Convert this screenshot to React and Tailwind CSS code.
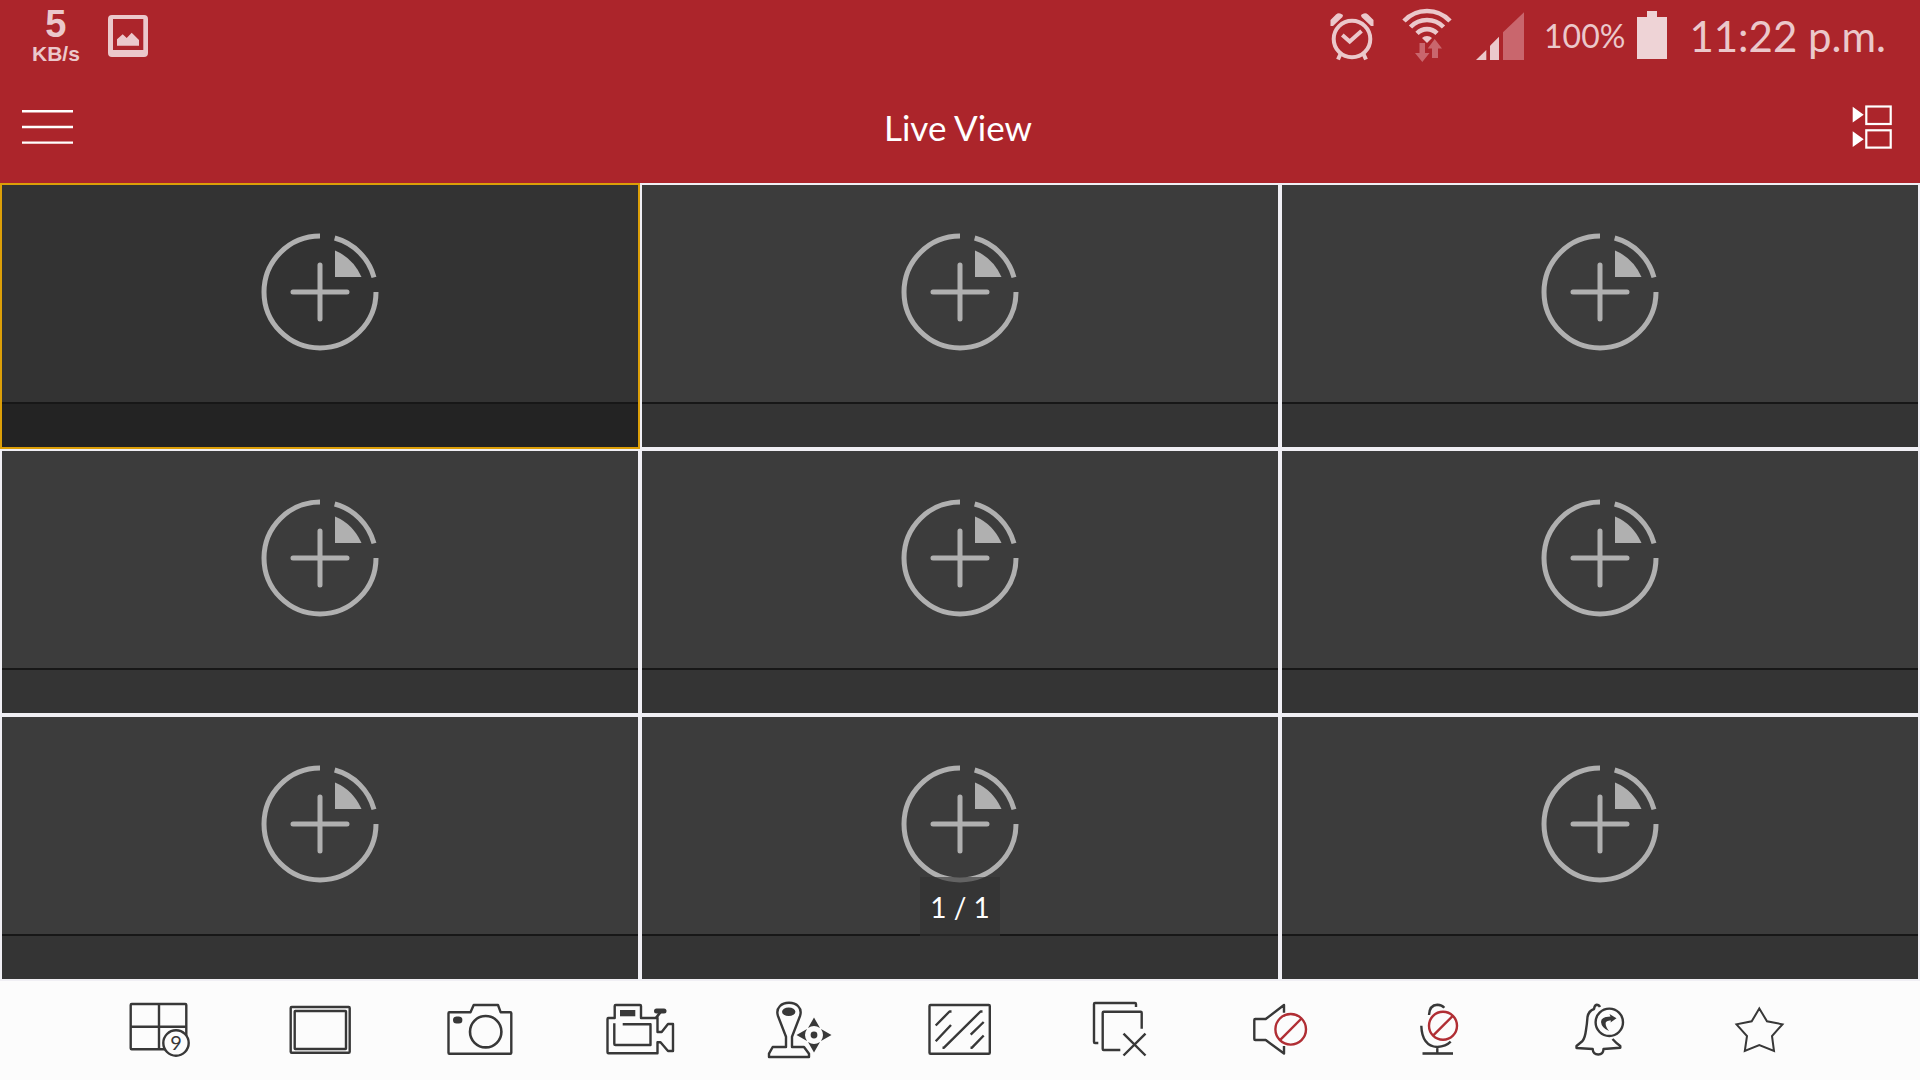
import { useState } from "react";

// ============================
// STATUS BAR ICONS
// ============================

const PictureIcon = () => (
  <svg width="40" height="72" viewBox="0 0 40 72" fill="#ebc8cb">
    <path
      fillRule="evenodd"
      d="M4 15H36Q40 15 40 19V53Q40 57 36 57H4Q0 57 0 53V19Q0 15 4 15ZM5 19V50H35.300V19Z"
    />
    <path d="M9 45.700V39.300L14.700 34.300L18.700 38L23.700 32.700L31 40V45.700Z" />
  </svg>
);

const AlarmIcon = () => (
  <svg
    width="44"
    height="72"
    viewBox="0 0 44 72"
    fill="none"
    stroke="#ebc8cb"
    strokeWidth="4"
  >
    <circle cx="22" cy="39" r="18.300" />
    <path d="M12.300 35L19.700 41.500L31.500 31" />
    <path d="M10.500 54L8 59.500M33.500 54L36 59.500" />
    <path
      d="M0.500 26V20L6 14.500Q9 12 13 15L12.500 17L3 26ZM43.500 26V20L38 14.500Q35 12 31 15L31.500 17L41 26Z"
      fill="#ebc8cb"
      stroke="none"
    />
  </svg>
);

const WifiIcon = () => (
  <svg width="50" height="72" viewBox="0 0 50 72" fill="none">
    <g stroke="#ebc8cb" strokeWidth="4.600">
      <path d="M2 21A31.500 31.500 0 0 1 48 21" />
      <path d="M8.500 27A23 23 0 0 1 41.500 27" />
      <path d="M15 33.300A14 14 0 0 1 35 33.300" />
    </g>
    <path d="M20 38A7 7 0 0 1 30 38L25 43Z" fill="#ebc8cb" />
    <path d="M17.500 43H23V53H27.500L20.300 62L13 53H17.500Z" fill="#c9666d" />
    <path
      d="M32.700 39L40 48.500H36V58H30V48.500H25.700Z"
      fill="#c9666d"
    />
  </svg>
);

const SignalIcon = () => (
  <svg width="48" height="72" viewBox="0 0 48 72" fill="#ebc8cb">
    <path d="M0 60L10.300 50V60Z" />
    <path d="M14 60V45.700L23 36.700V60Z" />
    <path d="M27 60V32.300L48 12.300V60Z" fill="#c9666d" />
  </svg>
);

const BatteryIcon = () => (
  <svg width="30" height="72" viewBox="0 0 30 72" fill="#eed3d6">
    <path d="M10 11H20V17H30V59H0V17H10Z" />
  </svg>
);

// ============================
// TITLE BAR ICONS
// ============================

const MenuIcon = () => (
  <svg width="52" height="40" viewBox="0 0 52 40" stroke="#fff">
    <path d="M0 3.300H51M0 19H51M0 34.600H51" strokeWidth="2.400" />
  </svg>
);

const DevicesIcon = () => (
  <svg width="44" height="56" viewBox="0 0 44 56" fill="#fff">
    <path d="M2.700 6.700L13.700 14.700L2.700 22.500ZM2.700 31.300L13.700 39.300L2.700 47Z" />
    <g fill="none" stroke="#fff" strokeWidth="2.200">
      <rect x="16.300" y="6.500" width="24.400" height="17.500" />
      <rect x="16.300" y="30.300" width="24.400" height="17.300" />
    </g>
  </svg>
);

// ============================
// CAMERA CELL ICON
// ============================

const AddCameraIcon = () => (
  <svg
    width="118"
    height="118"
    viewBox="-59 -59 118 118"
    fill="none"
    stroke="#b0b0b0"
    strokeWidth="5"
  >
    <path d="M0 -56A56 56 0 1 0 56 0" />
    <path d="M14.700 -54A56 56 0 0 1 54 -14.700" />
    <path
      d="M15 -41.500Q33 -34 41.500 -15H15Z"
      fill="#b0b0b0"
      stroke="none"
    />
    <path d="M-27 0H27M0 -27V27" strokeLinecap="round" />
  </svg>
);

// ============================
// TOOLBAR ICONS
// ============================

const ToolSvg = ({ children }) => (
  <svg
    width="72"
    height="64"
    viewBox="-36 -32 72 64"
    fill="none"
    stroke="#383838"
    strokeWidth="2.400"
    strokeLinejoin="round"
  >
    {children}
  </svg>
);

const Forbidden = ({ cx, cy, r, d }) => (
  <g stroke="#b02e34">
    <circle cx={cx} cy={cy} r={r} />
    <path d={d} />
  </g>
);

const tools = [
  {
    name: "Window division",
    icon: (
      <ToolSvg>
        <rect x="-29.300" y="-26" width="55.600" height="45.300" rx="1" />
        <path d="M-1 -26V19.300M-29.300 -3.300H26.300" />
        <circle cx="16" cy="13" r="12.700" fill="#fcfcfc" />
        <text
          x="16"
          y="20"
          textAnchor="middle"
          fontSize="20"
          fontFamily="Lato, sans-serif"
          fill="#383838"
          stroke="none"
        >
          9
        </text>
      </ToolSvg>
    ),
  },
  {
    name: "Full screen",
    icon: (
      <ToolSvg>
        <rect x="-29.300" y="-23" width="59" height="45.700" rx="1" />
        <rect x="-25.300" y="-19" width="51.300" height="38" rx="0.500" />
      </ToolSvg>
    ),
  },
  {
    name: "Capture",
    icon: (
      <ToolSvg>
        <path d="M-30.700 -17.700H-9.500L-6.300 -25H18L20.700 -17.700H30.300Q31.300 -17.700 31.300 -16.700V22.700Q31.300 23.700 30.300 23.700H-30.700Q-31.500 23.700 -31.500 22.700V-16.700Q-31.500 -17.700 -30.700 -17.700Z" />
        <circle cx="5.700" cy="1.700" r="15.700" strokeWidth="2.600" />
        <rect
          x="-27"
          y="-13.500"
          width="9.400"
          height="7"
          rx="3.500"
          fill="#383838"
          stroke="none"
        />
      </ToolSvg>
    ),
  },
  {
    name: "Record",
    icon: (
      <ToolSvg>
        <path d="M1 -12H17.500V2H21.700L28 -6H33V21H28L20.500 12.300H17.500V23.300H-31.500Q-32.500 23.300 -32.500 22.300V-11Q-32.500 -12 -31.500 -12H-25.300V-24Q-25.300 -25 -24.300 -25H0Q1 -25 1 -24Z" />
        <path d="M-17.300 -5.700H10.500V15H-24.500Q-25.700 15 -25.700 14V-6.700" />
        <rect
          x="-20"
          y="-20"
          width="15.300"
          height="6.300"
          fill="#383838"
          stroke="none"
        />
        <path d="M16.500 -19H24" strokeWidth="5" strokeLinecap="round" />
        <path d="M20.500 -18L16 -12" strokeWidth="2.800" />
      </ToolSvg>
    ),
  },
  {
    name: "PTZ control",
    icon: (
      <ToolSvg>
        <path d="M-14 17V6.700L-22 -14Q-24 -20 -20 -24Q-17 -27.300 -11 -27.300Q-5 -27.300 -2 -24Q2 -20 0 -14L-8 6.700V17H4L9 23.700V27H-31V23.700L-27.300 17Z" />
        <ellipse
          cx="-11.300"
          cy="-18.300"
          rx="6.700"
          ry="4.300"
          fill="#383838"
          stroke="none"
        />
        <g fill="#383838" stroke="none">
          <path d="M14 -12.500L20 -2Q14 -6 8 -2Z" />
          <path d="M14 22.500L20 12Q14 16 8 12Z" />
          <path d="M-3.500 5L7 -1Q3 5 7 11Z" />
          <path d="M31.500 5L21 -1Q25 5 21 11Z" />
          <circle cx="14" cy="5" r="3.400" />
        </g>
      </ToolSvg>
    ),
  },
  {
    name: "Video quality",
    icon: (
      <ToolSvg>
        <rect x="-30.500" y="-25" width="60.300" height="48.700" rx="1" />
        <path d="M-24.300 -4.500L-10.500 -18.500H-8.500M-24.300 11.300L-9 -5M-17.500 17.700H-16L20.500 -18.500H22.500M10.700 4.700L23.700 -8M10.500 17.700H12L23.700 5.500" />
      </ToolSvg>
    ),
  },
  {
    name: "Close all",
    icon: (
      <ToolSvg>
        <path d="M-21.700 13H-25Q-26 13 -26 12V-26Q-26 -27 -25 -27H15Q16 -27 16 -26V-23" />
        <path d="M0.300 20H-16.300Q-17.300 20 -17.300 19V-17.300Q-17.300 -18.300 -16.300 -18.300H20.700Q21.700 -18.300 21.700 -17.300V-1.300" />
        <path d="M3.500 3.700L25.500 25.500M25.500 3.700L3.500 25.500" />
      </ToolSvg>
    ),
  },
  {
    name: "Audio",
    icon: (
      <ToolSvg>
        <path d="M4 -17.300V-25L-14.300 -11H-24.700Q-25.700 -11 -25.700 -10V9Q-25.700 10 -24.700 10H-14.300L4 23.500V16" />
        <Forbidden
          cx="10.700"
          cy="-0.700"
          r="15.300"
          d="M21.500 -11.500L0 10.200"
        />
      </ToolSvg>
    ),
  },
  {
    name: "Two-way audio",
    icon: (
      <ToolSvg>
        <path d="M-11 -15Q-10.500 -25 -2.700 -25.300Q2 -25 4.300 -22.300" />
        <path d="M-18.700 -4.300Q-18 16 -2.700 17Q6 16.500 10.700 11.700M-2.700 17V23" />
        <path d="M-17.500 23.500H13" strokeWidth="2.600" />
        <Forbidden cx="3" cy="-4.300" r="14" d="M13 -14.300L-7 5.600" />
      </ToolSvg>
    ),
  },
  {
    name: "Alarm output",
    icon: (
      <ToolSvg>
        <path d="M0 -23Q-1 -25.300 -3.300 -25.300Q-5.500 -25 -6 -21Q-11.500 -19 -12.500 -13Q-13 -6 -14 0Q-15 8 -17.500 11L-23.500 16V18L-7.300 19Q-7 24.500 -1.700 24.500Q3.300 24.500 3.500 19L20.300 17.700V16Q16 13 12.500 9" />
        <circle cx="9.300" cy="-7.700" r="13.700" />
        <path
          d="M16.500 -11.700L9.500 -16L10.500 -13.500Q1 -13.500 1 -8Q1.500 -2 9 1Q4.500 -5 6 -8Q7.500 -10 11 -9.500L10.500 -7.500Z"
          fill="#383838"
          stroke="none"
        />
      </ToolSvg>
    ),
  },
  {
    name: "Favorites",
    icon: (
      <ToolSvg>
        <path
          strokeLinejoin="miter"
          strokeWidth="2"
          d="M-0.700 -21.500L7 -8.700L22.500 -5.700L12 6L14 21L-0.700 15L-15.200 21L-13 6L-23.500 -5.700L-8.300 -8.700Z"
        />
      </ToolSvg>
    ),
  },
];

const cameras = [1, 2, 3, 4, 5, 6, 7, 8, 9];

export default function App() {

  const [selected, setSelected] =
    useState(1);

  return (

    <div className="min-h-screen flex flex-col bg-[#fcfcfc] font-['Lato','Liberation_Sans',sans-serif]">

      {/* STATUS BAR */}
      <div className="h-[72px] shrink-0 flex items-center justify-between bg-[#ac252b] pl-8 pr-[34px] text-[#ebc8cb]">

        <div className="flex items-center gap-7">

          <div className="flex flex-col items-center font-['Liberation_Sans',sans-serif] font-bold">
            <span className="text-[38px] leading-9">5</span>
            <span className="text-[21px] leading-6">KB/s</span>
          </div>

          <PictureIcon />

        </div>

        <div className="flex items-center">
          <AlarmIcon />
          <div className="ml-7">
            <WifiIcon />
          </div>
          <div className="ml-6">
            <SignalIcon />
          </div>
          <span className="ml-5 text-[32px]">100%</span>
          <div className="ml-3">
            <BatteryIcon />
          </div>
          <span className="ml-[22px] text-[42px]">11:22 p.m.</span>
        </div>

      </div>

      {/* TITLE BAR */}
      <header className="h-[111px] shrink-0 grid grid-cols-[1fr_auto_1fr] items-center bg-[#ac252b] pl-[22px] pr-[26px] text-white">

        <button aria-label="Menu" className="justify-self-start">
          <MenuIcon />
        </button>

        <h1 className="text-[35px]">Live View</h1>

        <button aria-label="Devices" className="justify-self-end">
          <DevicesIcon />
        </button>

      </header>

      {/* CAMERA GRID */}
      <main className="relative flex-1 grid grid-cols-3 grid-rows-3">

        {cameras.map((id) => (

          <button
            key={id}
            aria-label={`Add camera ${id}`}
            onClick={() =>
              setSelected(id)
            }
            className={`flex flex-col border-2 ${
              selected === id
                ? "border-[#dc9f08] bg-[#333333]"
                : "border-[#f0eff4] bg-[#3c3c3c]"
            }`}
          >
            <span className="flex-1 w-full flex items-center justify-center pb-[3px]">
              <AddCameraIcon />
            </span>
            <span
              className={`h-[45px] w-full border-t-2 border-[#171717] ${
                selected === id
                  ? "bg-[#232323]"
                  : "bg-[#343434]"
              }`}
            />
          </button>

        ))}

        {/* PAGE COUNTER */}
        <div className="absolute bottom-[45px] left-1/2 -translate-x-1/2 w-20 h-[59px] flex items-center justify-center bg-[#313131]/60 text-white text-[28px] whitespace-nowrap">
          1 / 1
        </div>

      </main>

      {/* TOOLBAR */}
      <nav className="h-[99px] shrink-0 flex items-center px-20 pb-0.5">

        {tools.map((tool) => (

          <button
            key={tool.name}
            aria-label={tool.name}
            className="flex-1 flex justify-center"
          >
            {tool.icon}
          </button>

        ))}

      </nav>

    </div>
  );
}
